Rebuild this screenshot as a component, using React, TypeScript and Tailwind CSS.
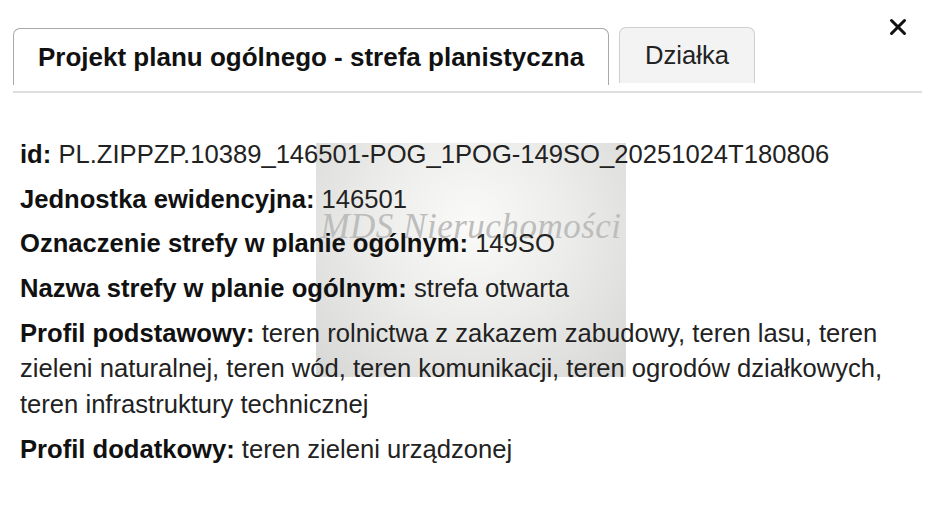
import { X } from 'lucide-react'

/* ── Data ───────────────────────────────────────────────────────────── */

const ROWS: { label: string; value: string }[] = [
  { label: 'id:', value: 'PL.ZIPPZP.10389_146501-POG_1POG-149SO_20251024T180806' },
  { label: 'Jednostka ewidencyjna:', value: '146501' },
  { label: 'Oznaczenie strefy w planie ogólnym:', value: '149SO' },
  { label: 'Nazwa strefy w planie ogólnym:', value: 'strefa otwarta' },
  {
    label: 'Profil podstawowy:',
    value:
      'teren rolnictwa z zakazem zabudowy, teren lasu, teren zieleni naturalnej, teren wód, teren komunikacji, teren ogrodów działkowych, teren infrastruktury technicznej',
  },
  { label: 'Profil dodatkowy:', value: 'teren zieleni urządzonej' },
]

/* ── Component ──────────────────────────────────────────────────────── */

export default function App() {
  return (
    <div className="relative h-[520px] w-[942px] overflow-hidden bg-white font-['Liberation_Sans',Arial,sans-serif] text-[#222]">
      {/* Watermark behind the content */}
      <div className="absolute left-[316px] top-[143px] flex h-[234px] w-[310px] items-start justify-center bg-[radial-gradient(ellipse_at_50%_35%,#fafaf8_0%,#ececea_45%,#d6d6d5_100%)] pt-[66px]">
        <span className="font-['Liberation_Serif',serif] text-[35px] italic leading-none tracking-[0.5px] text-[#bdbdbd]">
          MDS Nieruchomości
        </span>
      </div>

      {/* Close */}
      <button className="absolute left-[885px] top-[14px] text-[#111]">
        <X size={26} strokeWidth={2.8} />
      </button>

      {/* Tabs */}
      <div className="flex items-start gap-[10px] pl-[13px] pt-[27px]">
        <div className="mt-[1px] flex h-[57px] items-center rounded-t-[7px] border-x-[1.5px] border-t-[1.5px] border-[#a9a9a9] bg-white px-[24px] text-[26px] font-bold text-[#111]">
          Projekt planu ogólnego - strefa planistyczna
        </div>
        <div className="flex h-[56px] items-center rounded-t-[7px] border-x-[1.5px] border-t-[1.5px] border-[#cfcfcf] bg-[#f3f3f3] px-[25px] text-[25.6px] text-[#222]">
          Działka
        </div>
      </div>
      <div className="ml-[13px] mt-[6px] h-[2px] w-[909px] bg-[#dedede]" />

      {/* Attributes */}
      <div className="relative w-[922px] pl-[20px] pt-[44px] text-[25.6px] leading-[35.84px]">
        {ROWS.map((r) => (
          <p key={r.label} className="mb-[8.8px]">
            <b className="font-bold text-[#111]">{r.label}</b> {r.value}
          </p>
        ))}
      </div>
    </div>
  )
}
